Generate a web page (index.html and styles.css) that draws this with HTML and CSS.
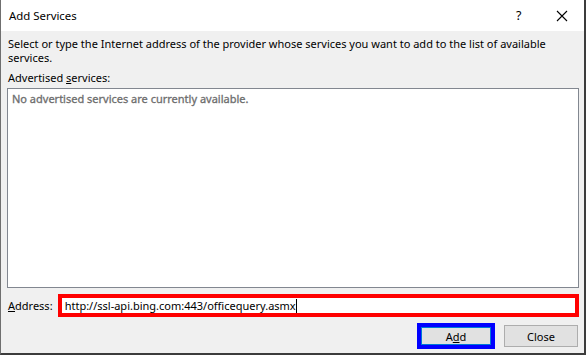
FILE: index.html
```html
<!DOCTYPE html>
<html>
<head>
<meta charset="utf-8">
<link rel="stylesheet" href="styles.css">
</head>
<body>
<div class="dialog">
  <div class="titlebar">
    <span class="title">Add Services</span>
    <span class="help">?</span>
    <span class="close">
      <svg width="12" height="12" viewBox="0 0 12 12"><path d="M1 1 L11 11 M11 1 L1 11" stroke="#000" stroke-width="1.1" fill="none"/></svg>
    </span>
  </div>
  <div class="content">
    <p class="intro">Select or type the Internet address of the provider whose services you want to add to the list of available services.</p>
    <div class="label">Advertised <u>s</u>ervices:</div>
    <div class="listbox"><span class="empty">No advertised services are currently available.</span></div>
    <div class="addr-row">
      <span class="addr-label"><u>A</u>ddress:</span>
      <div class="addr-box"><span class="addr-text">http://ssl-api.bing.com:443/officequery.asmx</span><span class="caret"></span></div>
    </div>
    <div class="buttons">
      <div class="btn btn-add">A<u>d</u>d</div>
      <div class="btn btn-close">Close</div>
    </div>
  </div>
</div>
</body>
</html>
```
FILE: styles.css
```css
html, body {
  margin: 0;
  padding: 0;
  background: #f0f0f0;
}
.dialog {
  width: 583px;
  height: 353px;
  background: #f0f0f0;
  border-left: 1px solid #6f6f6f;
  border-right: 2px solid #3c3c3c;
  border-bottom: 2px solid #3c3c3c;
  font-family: "Noto Sans", "Open Sans", sans-serif;
  font-size: 11px;
  color: #000;
  display: flex;
  flex-direction: column;
}
.titlebar {
  height: 31px;
  background: #fff;
  display: flex;
  align-items: center;
  flex-shrink: 0;
}
.title {
  font-size: 11.4px;
  margin-left: 8px;
  flex: 1;
}
.help {
  font-size: 12.5px;
  width: 12px;
  margin-right: 28px;
}
.close {
  width: 12px;
  height: 12px;
  margin-right: 16px;
  display: flex;
}
.content {
  padding: 6px 5px 0 6px;
  display: flex;
  flex-direction: column;
}
.intro {
  margin: 0 0 0 1px;
  line-height: 14px;
}
.label {
  margin: 6px 0 0 1px;
  line-height: 14px;
}
.listbox {
  margin-top: 3px;
  height: 198px;
  width: 570px;
  background: #fff;
  border: 1px solid #828790;
  padding: 0;
}
.empty {
  display: block;
  color: #6d6d6d;
  margin: 3px 0 0 4px;
  line-height: 14px;
  -webkit-text-stroke: 0.3px #6d6d6d;
}
.addr-row {
  display: flex;
  align-items: center;
  margin-top: 6px;
}
.addr-label {
  margin-left: 1px;
  width: 50px;
}
.addr-box {
  width: 514px;
  height: 15px;
  border: 4px solid #ff0000;
  background: #fff;
  display: flex;
  align-items: center;
  padding-left: 3px;
}
.caret {
  display: inline-block;
  width: 1px;
  height: 14px;
  background: #000;
}
.buttons {
  display: flex;
  justify-content: flex-end;
  align-items: center;
  margin-top: 6px;
  gap: 9px;
  padding-right: 1px;
}
.btn {
  box-sizing: border-box;
  display: flex;
  align-items: center;
  justify-content: center;
  background: #e1e1e1;
}
.btn-add {
  width: 78px;
  height: 26px;
  border: 4px solid #0000ff;
  box-shadow: inset 0 0 0 1px #0078d7;
}
.btn-close {
  width: 74px;
  height: 22px;
  border: 1px solid #adadad;
}
```
